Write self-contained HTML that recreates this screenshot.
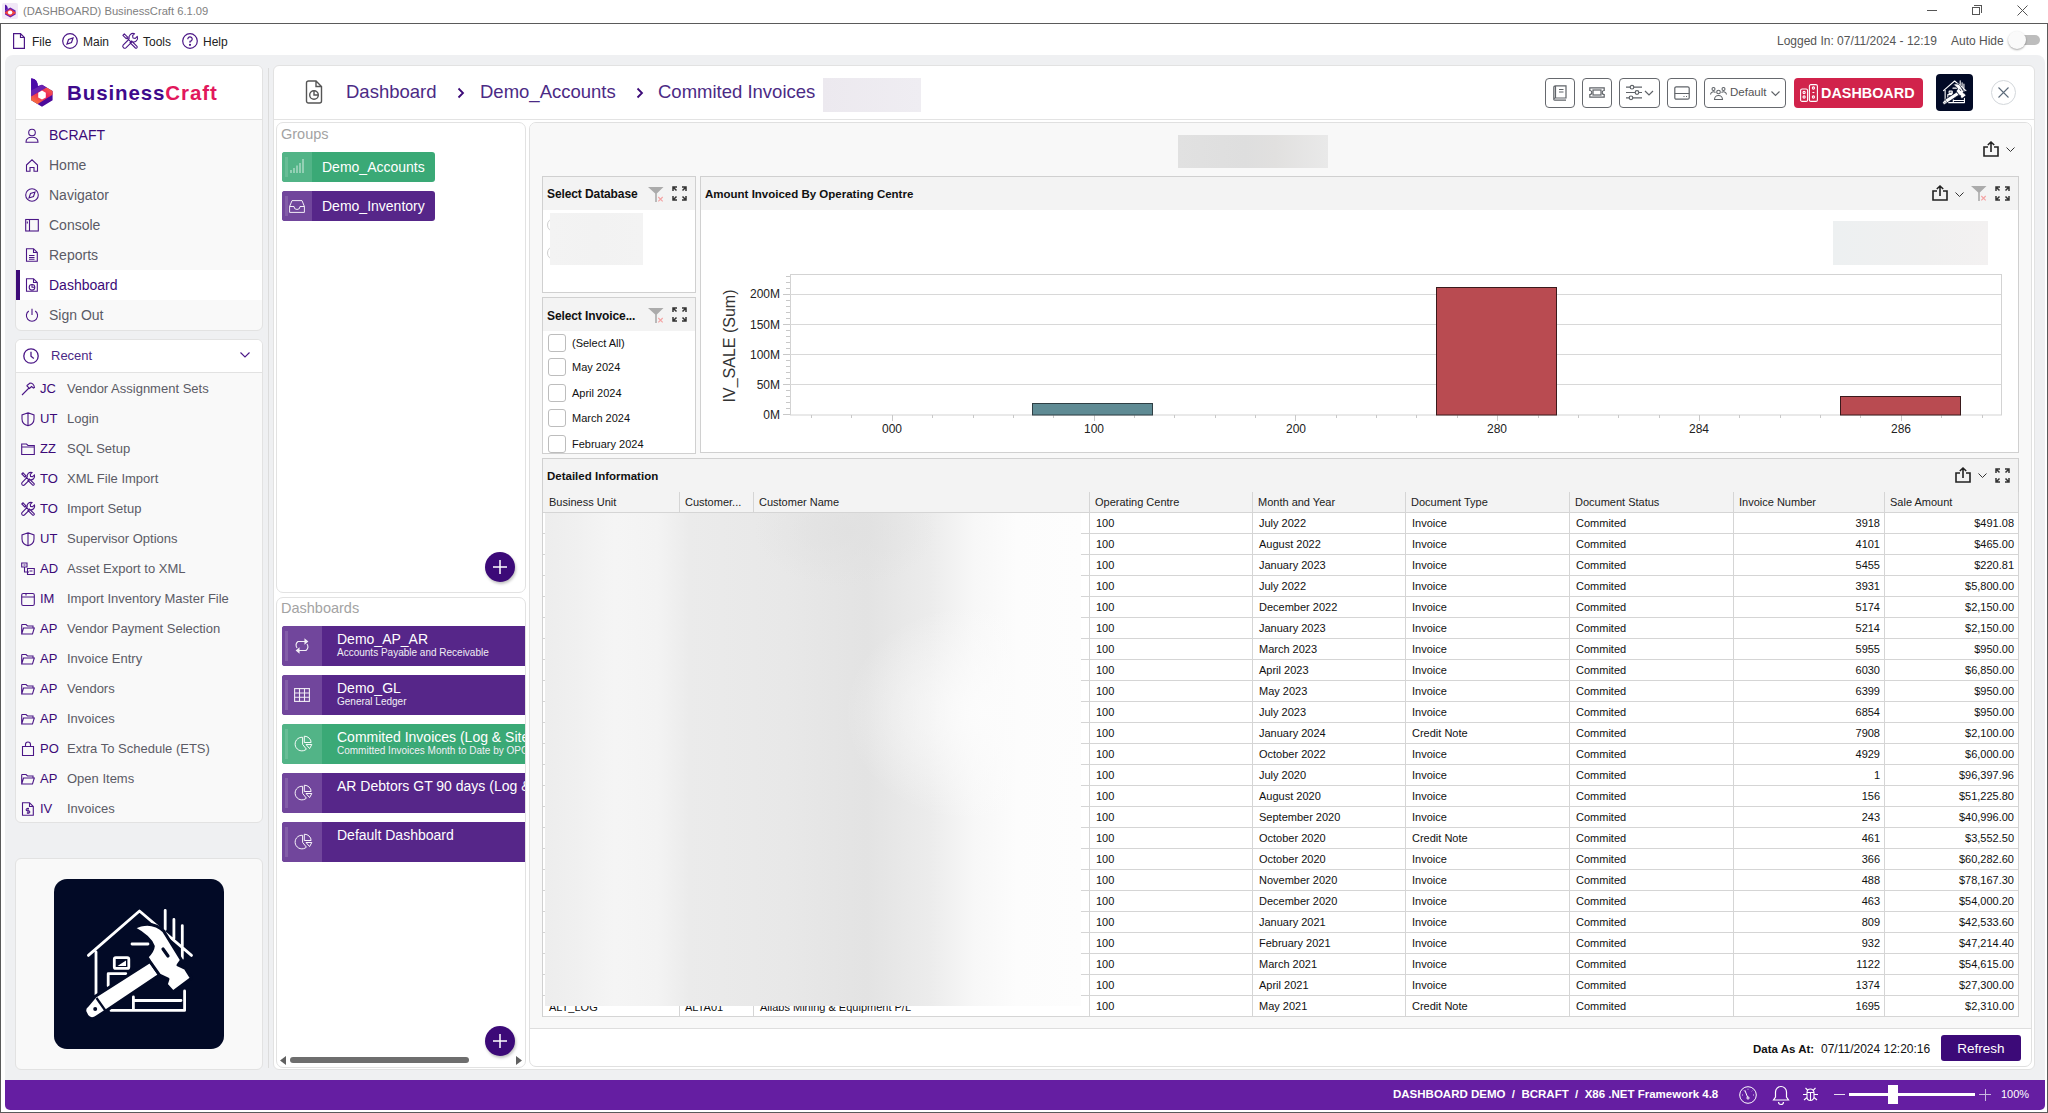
<!DOCTYPE html>
<html><head><meta charset="utf-8">
<style>
*{box-sizing:border-box;margin:0;padding:0}
html,body{width:2048px;height:1113px;overflow:hidden;background:#fff;font-family:"Liberation Sans",sans-serif}
.a{position:absolute}
.t{position:absolute;white-space:nowrap}
svg{position:absolute;overflow:visible}
</style></head><body>
<div class="a" style="left:0;top:0;width:2048px;height:1113px">

<!-- ===== TITLE BAR ===== -->
<div class="a" style="left:2px;top:3px;width:16px;height:16px;background:#f1e8f7;border-radius:2px"></div>
<svg style="left:4px;top:4px" width="13" height="14" viewBox="0 0 13 14">
<path d="M1 0.5 Q3.5 1 3.8 4 L3.8 5.2 L1 6.6Z" fill="#5214a8"/>
<path d="M1 6.6 L6.3 3.6 L11.6 6.6 L11.6 10.6 L6.3 13.6 L1 10.6Z" fill="#6b1fb0"/>
<path d="M1 8.2 L6.3 5.1 L11.6 8.2 L11.6 9.2 L6.3 12.3 L1 9.2Z" fill="#f0433f"/>
<ellipse cx="6.1" cy="8.6" rx="2.2" ry="2" fill="#fff"/>
</svg>
<div class="t" style="left:23px;top:3px;font-size:11.2px;line-height:16px;color:#808080">(DASHBOARD) BusinessCraft 6.1.09</div>
<!-- window controls -->
<div class="a" style="left:1927px;top:10px;width:10px;height:1px;background:#555"></div>
<div class="a" style="left:1972px;top:7px;width:8px;height:8px;border:1px solid #555"></div>
<div class="a" style="left:1974px;top:5px;width:8px;height:8px;border-top:1px solid #555;border-right:1px solid #555"></div>
<svg style="left:2017px;top:5px" width="11" height="11" viewBox="0 0 11 11"><path d="M0.5 0.5L10.5 10.5M10.5 0.5L0.5 10.5" stroke="#555" stroke-width="1"/></svg>

<!-- window border -->
<div class="a" style="left:0;top:23px;width:2048px;height:1px;background:#5a5a5a"></div>
<div class="a" style="left:0;top:23px;width:1px;height:1090px;background:#5a5a5a"></div>
<div class="a" style="left:2047px;top:23px;width:1px;height:1090px;background:#5a5a5a"></div>
<div class="a" style="left:0;top:1112px;width:2048px;height:1px;background:#5a5a5a"></div>

<!-- ===== MENU BAR ===== -->
<svg style="left:13px;top:33px" width="12" height="16" viewBox="0 0 12 16" fill="none" stroke="#4b1787" stroke-width="1.2"><path d="M0.6 0.6H7.5L11.4 4.5V15.4H0.6Z M7.5 0.6V4.5H11.4"/></svg>
<div class="t" style="left:32px;top:34px;font-size:12px;line-height:17px;color:#222">File</div>
<svg style="left:62px;top:33px" width="16" height="16" viewBox="0 0 16 16" fill="none" stroke="#4b1787" stroke-width="1.2"><circle cx="8" cy="8" r="7.3"/><path d="M11 5L9.5 9.5L5 11L6.5 6.5Z"/></svg>
<div class="t" style="left:83px;top:34px;font-size:12px;line-height:17px;color:#222">Main</div>
<svg style="left:122px;top:33px" width="16" height="16" viewBox="0 0 16 16" fill="none" stroke="#4b1787" stroke-width="1.1" stroke-linejoin="round"><path d="M0.9 2.3L2.3 0.9L5.6 4.2L4.2 5.6Z M4.9 4.9L8.6 8.6 M8 9.6L9.6 8L15 13.4Q15.5 14 15 14.6L14.6 15Q14 15.5 13.4 15L8 9.6Z M7.2 6A4.2 4.2 0 0 1 12.6 0.7L10.6 2.7L11 5L13.3 5.4L15.3 3.4A4.2 4.2 0 0 1 10 8.8 M7.2 6L1.1 12.1Q0.2 13.4 1.4 14.6Q2.6 15.8 3.9 14.9L10 8.8"/></svg>
<div class="t" style="left:143px;top:34px;font-size:12px;line-height:17px;color:#222">Tools</div>
<svg style="left:182px;top:33px" width="16" height="16" viewBox="0 0 16 16" fill="none" stroke="#4b1787" stroke-width="1.2"><circle cx="8" cy="8" r="7.3"/><path d="M5.8 6.2A2.2 2.2 0 1 1 8 8.3V9.8"/><circle cx="8" cy="11.8" r="0.5" fill="#4b1787"/></svg>
<div class="t" style="left:203px;top:34px;font-size:12px;line-height:17px;color:#222">Help</div>

<div class="t" style="left:1777px;top:33px;font-size:12px;line-height:17px;color:#555">Logged In: 07/11/2024 - 12:19</div>
<div class="t" style="left:1951px;top:33px;font-size:12px;line-height:17px;color:#555">Auto Hide</div>
<div class="a" style="left:2010px;top:35px;width:30px;height:10px;border-radius:5px;background:#bdbdbd"></div>
<div class="a" style="left:2008px;top:31px;width:18px;height:18px;border-radius:50%;background:#fafafa;box-shadow:0 1px 2px rgba(0,0,0,.35)"></div>

<!-- ===== GRAY BACKGROUND ===== -->
<div class="a" style="left:5px;top:55px;width:2040px;height:1055px;background:#eff0f2;border-radius:8px 8px 4px 4px"></div>

<!-- SIDEBAR -->
<div class="a" style="left:15px;top:65px;width:248px;height:266px;background:#f9f9f9;border:1px solid #e2e2e2;border-radius:6px;overflow:hidden">
<div class="a" style="left:0;top:0;width:246px;height:54px;background:#fff;border-bottom:1px solid #e2e2e2"></div>
<div class="a" style="left:0;top:204px;width:246px;height:30px;background:#fff"></div>
<div class="a" style="left:0;top:204px;width:4px;height:30px;background:#3c0a78"></div>
</div>
<svg style="left:31px;top:78px" width="23" height="30" viewBox="0 0 23 30">
<defs><linearGradient id="lg1" x1="0" y1="1" x2="1" y2="0"><stop offset="0" stop-color="#ff8f2e"/><stop offset=".55" stop-color="#ea1f5e"/><stop offset="1" stop-color="#ff7d3c"/></linearGradient>
<clipPath id="hx"><path d="M0.2 0.5Q6.5 0.8 6.8 8.3L11 6.8L21.6 13V22.3L11 28.7L0.2 22.3Z"/></clipPath></defs>
<g clip-path="url(#hx)">
<path d="M-1 -1H30V30H-1Z" fill="#4c0a9a"/>
<path d="M-1 -1H25L16 9.3L-1 19Z" fill="#6a22b0"/>
<path d="M-1 -1H8L8 8.5L-1 13Z" fill="#4a0aa8"/>
<path d="M-1 19L16 9.3L25 14.5L5 27L-1 24Z" fill="url(#lg1)"/>
</g>
<path d="M7.2 14.8L11 12.6L14.8 14.8V19.4L11 21.6L7.2 19.4Z" fill="#fff"/>
</svg>
<div class="t" style="left:67px;top:80px;font-size:20.5px;line-height:25px;font-weight:bold;letter-spacing:0.9px;color:#3f0a8c">Business<span style="color:#e2175c">Craft</span></div>
<svg style="left:25px;top:128px" width="14" height="14" viewBox="0 0 14 14" fill="none" stroke="#4b1787" stroke-width="1.1"><circle cx="7" cy="4.5" r="3.3"/><path d="M1 14.3C1 10.5 3.5 9.3 7 9.3S13 10.5 13 14.3Z"/></svg>
<div class="t" style="left:49px;top:126px;font-size:14px;line-height:18px;color:#3c0a78">BCRAFT</div>
<svg style="left:25px;top:158px" width="14" height="14" viewBox="0 0 14 14" fill="none" stroke="#4b1787" stroke-width="1.1"><path d="M1.5 7L7 1.8L12.5 7V13.3H9V9.5H5V13.3H1.5Z"/></svg>
<div class="t" style="left:49px;top:156px;font-size:14px;line-height:18px;color:#5b5b66">Home</div>
<svg style="left:25px;top:188px" width="14" height="14" viewBox="0 0 14 14" fill="none" stroke="#4b1787" stroke-width="1.1"><circle cx="7" cy="7" r="6.3"/><path d="M10 4L8.5 8.5L4 10L5.5 5.5Z"/></svg>
<div class="t" style="left:49px;top:186px;font-size:14px;line-height:18px;color:#5b5b66">Navigator</div>
<svg style="left:25px;top:218px" width="14" height="14" viewBox="0 0 14 14" fill="none" stroke="#4b1787" stroke-width="1.1"><rect x="0.7" y="1.5" width="12.6" height="11.5"/><path d="M4.5 1.5V13 M2.3 3.5V5.5"/></svg>
<div class="t" style="left:49px;top:216px;font-size:14px;line-height:18px;color:#5b5b66">Console</div>
<svg style="left:25px;top:248px" width="14" height="14" viewBox="0 0 14 14" fill="none" stroke="#4b1787" stroke-width="1.1"><path d="M1.5 0.7H8.5L12.3 4.5V13.3H1.5Z M8.5 0.7V4.5H12.3 M4 7.5H9.5 M4 9.5H9.5 M4 11.3H9.5"/></svg>
<div class="t" style="left:49px;top:246px;font-size:14px;line-height:18px;color:#5b5b66">Reports</div>
<svg style="left:25px;top:278px" width="14" height="14" viewBox="0 0 14 14" fill="none" stroke="#4b1787" stroke-width="1.1"><path d="M1.5 0.7H8.5L12.3 4.5V13.3H1.5Z M8.5 0.7V4.5H12.3"/><circle cx="7" cy="9.3" r="2.8"/><path d="M7 6.5V9.3H9.8"/></svg>
<div class="t" style="left:49px;top:276px;font-size:14px;line-height:18px;color:#3c0a78">Dashboard</div>
<svg style="left:25px;top:308px" width="14" height="14" viewBox="0 0 14 14" fill="none" stroke="#4b1787" stroke-width="1.1"><path d="M7 0.8V7 M3.8 3A5.6 5.6 0 1 0 10.2 3"/></svg>
<div class="t" style="left:49px;top:306px;font-size:14px;line-height:18px;color:#5b5b66">Sign Out</div>
<div class="a" style="left:15px;top:339px;width:248px;height:484px;background:#f9f9f9;border:1px solid #e2e2e2;border-radius:6px;overflow:hidden">
<div class="a" style="left:0;top:0;width:246px;height:33px;background:#fff;border-bottom:1px solid #e2e2e2"></div>
</div>
<svg style="left:23px;top:348px" width="16" height="16" viewBox="0 0 16 16" fill="none" stroke="#4b1787" stroke-width="1.3"><circle cx="8" cy="8" r="7.2"/><path d="M8 3.8V8.2L10.8 10.5"/></svg>
<div class="t" style="left:51px;top:347px;font-size:13px;line-height:18px;color:#4b2a85">Recent</div>
<svg style="left:240px;top:352px" width="10" height="6" viewBox="0 0 10 6" fill="none" stroke="#4b1787" stroke-width="1.1"><path d="M0.5 0.5L5 5L9.5 0.5"/></svg>
<svg style="left:21px;top:382px" width="14" height="14" viewBox="0 0 14 14" fill="none" stroke="#4b1787" stroke-width="1.1"><path d="M1 13L8 6 M6 3.5L9 1C11 1 13 3 13.5 5.5L12.5 6L10.5 4.5L8.5 6.5L6 4Z"/></svg>
<div class="t" style="left:40px;top:380px;font-size:13px;line-height:18px;color:#3c0a78">JC</div>
<div class="t" style="left:67px;top:380px;font-size:13px;line-height:18px;color:#5b5b66">Vendor Assignment Sets</div>
<svg style="left:21px;top:412px" width="14" height="14" viewBox="0 0 14 14" fill="none" stroke="#4b1787" stroke-width="1.1"><path d="M7 0.8L13 3V7C13 10.5 10.5 12.8 7 13.7C3.5 12.8 1 10.5 1 7V3Z M7 0.8V13.7"/></svg>
<div class="t" style="left:40px;top:410px;font-size:13px;line-height:18px;color:#3c0a78">UT</div>
<div class="t" style="left:67px;top:410px;font-size:13px;line-height:18px;color:#5b5b66">Login</div>
<svg style="left:21px;top:442px" width="14" height="14" viewBox="0 0 14 14" fill="none" stroke="#4b1787" stroke-width="1.1"><path d="M0.7 2H5.5L7 3.5H13.3V12.5H0.7Z M0.7 5H13.3"/></svg>
<div class="t" style="left:40px;top:440px;font-size:13px;line-height:18px;color:#3c0a78">ZZ</div>
<div class="t" style="left:67px;top:440px;font-size:13px;line-height:18px;color:#5b5b66">SQL Setup</div>
<svg style="left:21px;top:472px" width="14" height="14" viewBox="0 0 14 14" fill="none" stroke="#4b1787" stroke-width="1.1"><path d="M0.8 2L2 0.8L4.9 3.7L3.7 4.9Z M4.3 4.3L7.5 7.5 M7 8.4L8.4 7L13.1 11.7Q13.5 12.2 13.1 12.7L12.7 13.1Q12.2 13.5 11.7 13.1L7 8.4Z M6.3 5.2A3.7 3.7 0 0 1 11 0.6L9.3 2.4L9.6 4.4L11.6 4.7L13.4 3A3.7 3.7 0 0 1 8.8 7.7 M6.3 5.2L1 10.6Q0.2 11.7 1.2 12.8Q2.3 13.8 3.4 13L8.8 7.7"/></svg>
<div class="t" style="left:40px;top:470px;font-size:13px;line-height:18px;color:#3c0a78">TO</div>
<div class="t" style="left:67px;top:470px;font-size:13px;line-height:18px;color:#5b5b66">XML File Import</div>
<svg style="left:21px;top:502px" width="14" height="14" viewBox="0 0 14 14" fill="none" stroke="#4b1787" stroke-width="1.1"><path d="M0.8 2L2 0.8L4.9 3.7L3.7 4.9Z M4.3 4.3L7.5 7.5 M7 8.4L8.4 7L13.1 11.7Q13.5 12.2 13.1 12.7L12.7 13.1Q12.2 13.5 11.7 13.1L7 8.4Z M6.3 5.2A3.7 3.7 0 0 1 11 0.6L9.3 2.4L9.6 4.4L11.6 4.7L13.4 3A3.7 3.7 0 0 1 8.8 7.7 M6.3 5.2L1 10.6Q0.2 11.7 1.2 12.8Q2.3 13.8 3.4 13L8.8 7.7"/></svg>
<div class="t" style="left:40px;top:500px;font-size:13px;line-height:18px;color:#3c0a78">TO</div>
<div class="t" style="left:67px;top:500px;font-size:13px;line-height:18px;color:#5b5b66">Import Setup</div>
<svg style="left:21px;top:532px" width="14" height="14" viewBox="0 0 14 14" fill="none" stroke="#4b1787" stroke-width="1.1"><path d="M7 0.8L13 3V7C13 10.5 10.5 12.8 7 13.7C3.5 12.8 1 10.5 1 7V3Z M7 0.8V13.7"/></svg>
<div class="t" style="left:40px;top:530px;font-size:13px;line-height:18px;color:#3c0a78">UT</div>
<div class="t" style="left:67px;top:530px;font-size:13px;line-height:18px;color:#5b5b66">Supervisor Options</div>
<svg style="left:21px;top:562px" width="14" height="14" viewBox="0 0 14 14" fill="none" stroke="#4b1787" stroke-width="1.1"><path d="M0.7 1H6V5H0.7Z M2.5 3H4.5 M3.5 5V10H8 M6.5 6.5H13.3V12.5H6.5Z M8.5 9H11.5"/></svg>
<div class="t" style="left:40px;top:560px;font-size:13px;line-height:18px;color:#3c0a78">AD</div>
<div class="t" style="left:67px;top:560px;font-size:13px;line-height:18px;color:#5b5b66">Asset Export to XML</div>
<svg style="left:21px;top:592px" width="14" height="14" viewBox="0 0 14 14" fill="none" stroke="#4b1787" stroke-width="1.1"><rect x="0.7" y="1.5" width="12.6" height="12" rx="1.5"/><path d="M0.7 5H13.3 M5 1.5V3.5"/></svg>
<div class="t" style="left:40px;top:590px;font-size:13px;line-height:18px;color:#3c0a78">IM</div>
<div class="t" style="left:67px;top:590px;font-size:13px;line-height:18px;color:#5b5b66">Import Inventory Master File</div>
<svg style="left:21px;top:622px" width="14" height="14" viewBox="0 0 14 14" fill="none" stroke="#4b1787" stroke-width="1.1"><path d="M0.7 2.5H5L6.5 4H12V6 M0.7 12V2.5 M0.7 12L2.5 6H13.3L11.5 12Z"/></svg>
<div class="t" style="left:40px;top:620px;font-size:13px;line-height:18px;color:#3c0a78">AP</div>
<div class="t" style="left:67px;top:620px;font-size:13px;line-height:18px;color:#5b5b66">Vendor Payment Selection</div>
<svg style="left:21px;top:652px" width="14" height="14" viewBox="0 0 14 14" fill="none" stroke="#4b1787" stroke-width="1.1"><path d="M0.7 2.5H5L6.5 4H12V6 M0.7 12V2.5 M0.7 12L2.5 6H13.3L11.5 12Z"/></svg>
<div class="t" style="left:40px;top:650px;font-size:13px;line-height:18px;color:#3c0a78">AP</div>
<div class="t" style="left:67px;top:650px;font-size:13px;line-height:18px;color:#5b5b66">Invoice Entry</div>
<svg style="left:21px;top:682px" width="14" height="14" viewBox="0 0 14 14" fill="none" stroke="#4b1787" stroke-width="1.1"><path d="M0.7 2.5H5L6.5 4H12V6 M0.7 12V2.5 M0.7 12L2.5 6H13.3L11.5 12Z"/></svg>
<div class="t" style="left:40px;top:680px;font-size:13px;line-height:18px;color:#3c0a78">AP</div>
<div class="t" style="left:67px;top:680px;font-size:13px;line-height:18px;color:#5b5b66">Vendors</div>
<svg style="left:21px;top:712px" width="14" height="14" viewBox="0 0 14 14" fill="none" stroke="#4b1787" stroke-width="1.1"><path d="M0.7 2.5H5L6.5 4H12V6 M0.7 12V2.5 M0.7 12L2.5 6H13.3L11.5 12Z"/></svg>
<div class="t" style="left:40px;top:710px;font-size:13px;line-height:18px;color:#3c0a78">AP</div>
<div class="t" style="left:67px;top:710px;font-size:13px;line-height:18px;color:#5b5b66">Invoices</div>
<svg style="left:21px;top:742px" width="14" height="14" viewBox="0 0 14 14" fill="none" stroke="#4b1787" stroke-width="1.1"><path d="M1.5 4.5H12.5V13.5H1.5Z M4.5 4.5V2.5A2.5 2.5 0 0 1 9.5 2.5V4.5"/></svg>
<div class="t" style="left:40px;top:740px;font-size:13px;line-height:18px;color:#3c0a78">PO</div>
<div class="t" style="left:67px;top:740px;font-size:13px;line-height:18px;color:#5b5b66">Extra To Schedule (ETS)</div>
<svg style="left:21px;top:772px" width="14" height="14" viewBox="0 0 14 14" fill="none" stroke="#4b1787" stroke-width="1.1"><path d="M0.7 2.5H5L6.5 4H12V6 M0.7 12V2.5 M0.7 12L2.5 6H13.3L11.5 12Z"/></svg>
<div class="t" style="left:40px;top:770px;font-size:13px;line-height:18px;color:#3c0a78">AP</div>
<div class="t" style="left:67px;top:770px;font-size:13px;line-height:18px;color:#5b5b66">Open Items</div>
<svg style="left:21px;top:802px" width="14" height="14" viewBox="0 0 14 14" fill="none" stroke="#4b1787" stroke-width="1.1"><path d="M1.5 0.7H8.5L12.3 4.5V13.3H1.5Z M8.5 0.7V4.5H12.3 M8 6.5H6.3A1 1 0 0 0 6.3 8.8H7.7A1 1 0 0 1 7.7 11H5.8 M7 5.8V12"/></svg>
<div class="t" style="left:40px;top:800px;font-size:13px;line-height:18px;color:#3c0a78">IV</div>
<div class="t" style="left:67px;top:800px;font-size:13px;line-height:18px;color:#5b5b66">Invoices</div>
<div class="a" style="left:15px;top:858px;width:248px;height:212px;background:#f9f9f9;border:1px solid #e2e2e2;border-radius:6px"></div>
<div class="a" style="left:54px;top:879px;width:170px;height:170px;background:#020a26;border-radius:13px"></div>
<svg style="left:54px;top:879px" width="170" height="170" viewBox="0 0 170 170"><g fill="none" stroke="#fff" stroke-width="2.8" stroke-linecap="round" stroke-linejoin="round">
<path d="M34.4 76.4L85.5 32L137.5 76.4 M42 73V116 M57 131.4H130.6V112 M79.4 131.4V118 M79.4 121.5H127 M54.2 107V94.7H71.8 M78 65H94 M111.2 31.3V50.4 M119.9 40.5V59.6 M128.3 46.6V79.4"/>
<rect x="60.3" y="78.7" width="14.5" height="10.7" rx="1.5"/>
</g>
<path d="M63.5 87L72 81.5V87Z" fill="#fff"/>
<g fill="#fff" stroke="#020a26" stroke-width="3" stroke-linejoin="round">
<path d="M41 117.5L96 82.5L105.5 96L52.5 131.5L41 139Q36 141 33 137L31 133Q30 129 33 127Z"/>
<path d="M79.4 48.9Q90 44 97.8 45.8Q108 48 111.5 55L127.5 81L124 86L131.4 89.4L137.5 99.3L119.1 113L112.3 105.4L114 100L105.5 96L96 82.5L93 78Q99 72 99.3 67.2Q96 58 79.4 48.9Z"/>
</g>
<path d="M109 70L114 77" stroke="#020a26" stroke-width="3.2" stroke-linecap="round"/>
<path d="M42.5 119L52 132.5" stroke="#020a26" stroke-width="2.2"/>
<circle cx="41.2" cy="130" r="2" fill="#020a26"/></svg>
<div class="a" style="left:268px;top:68px;width:1px;height:1000px;background:#dcdcdc"></div>

<!-- MAIN CARD -->
<div class="a" style="left:273px;top:65px;width:1762px;height:1005px;background:#fff;border:1px solid #e2e2e2;border-radius:6px"></div>
<div class="a" style="left:274px;top:119px;width:1760px;height:1px;background:#e3e3e3"></div>
<svg style="left:305px;top:80px" width="18" height="24" viewBox="0 0 18 24" fill="none" stroke="#555" stroke-width="1.4"><path d="M1.5 3A2 2 0 0 1 3.5 1H11L16.5 6.5V21A2 2 0 0 1 14.5 23H3.5A2 2 0 0 1 1.5 21Z M11 1V6.5H16.5"/><circle cx="9" cy="15" r="4.3"/><path d="M9 10.7V15H13.3"/></svg>
<div class="t" style="left:346px;top:81px;font-size:18.5px;line-height:22px;color:#4b2a85">Dashboard</div>
<div class="t" style="left:480px;top:81px;font-size:18.5px;line-height:22px;color:#4b2a85">Demo_Accounts</div>
<div class="t" style="left:658px;top:81px;font-size:18.5px;line-height:22px;color:#4b2a85">Commited Invoices</div>
<svg style="left:457px;top:87px" width="8" height="12" viewBox="0 0 8 12" fill="none" stroke="#3c0a78" stroke-width="1.8"><path d="M1.5 1.5L6 6L1.5 10.5"/></svg>
<svg style="left:636px;top:87px" width="8" height="12" viewBox="0 0 8 12" fill="none" stroke="#3c0a78" stroke-width="1.8"><path d="M1.5 1.5L6 6L1.5 10.5"/></svg>
<div class="a" style="left:823px;top:78px;width:98px;height:34px;background:linear-gradient(90deg,#ece9ef,#efedf2)"></div>
<div class="a" style="left:1545px;top:78px;width:30px;height:30px;border:1.3px solid #66696e;border-radius:4px"></div>
<div class="a" style="left:1582px;top:78px;width:30px;height:30px;border:1.3px solid #66696e;border-radius:4px"></div>
<div class="a" style="left:1619px;top:78px;width:41px;height:30px;border:1.3px solid #66696e;border-radius:4px"></div>
<div class="a" style="left:1667px;top:78px;width:30px;height:30px;border:1.3px solid #66696e;border-radius:4px"></div>
<div class="a" style="left:1704px;top:78px;width:82px;height:30px;border:1.3px solid #66696e;border-radius:4px"></div>
<svg style="left:1553px;top:85px" width="14" height="16" viewBox="0 0 14 16" fill="none" stroke="#5f6368" stroke-width="1.2"><path d="M2.5 0.8H13V13H2.5A1.7 1.7 0 0 0 0.8 14.7V2.5A1.7 1.7 0 0 1 2.5 0.8Z M0.8 14.7A1.3 1.3 0 0 0 2.2 15.2H13 M2.5 0.8V13 M6 4.5H10.5 M6 7H10.5"/></svg>
<svg style="left:1589px;top:87px" width="16" height="11" viewBox="0 0 16 11" fill="none" stroke="#5f6368" stroke-width="1.2"><path d="M0.8 0.8H15.2V3.5A2 2 0 0 0 15.2 7.5V10.2H0.8V7.5A2 2 0 0 0 0.8 3.5Z"/><rect x="4" y="3" width="8" height="5"/></svg>
<svg style="left:1626px;top:85px" width="28" height="15" viewBox="0 0 28 15" fill="none" stroke="#5f6368" stroke-width="1.2"><path d="M0 2.2H16 M0 7.5H16 M0 12.8H16"/><circle cx="6" cy="2.2" r="1.8" fill="#fff"/><circle cx="11" cy="7.5" r="1.8" fill="#fff"/><circle cx="5" cy="12.8" r="1.8" fill="#fff"/><path d="M19 6L23 10L27 6"/></svg>
<svg style="left:1674px;top:86px" width="16" height="14" viewBox="0 0 16 14" fill="none" stroke="#5f6368" stroke-width="1.2"><rect x="0.8" y="0.8" width="14.4" height="12.4" rx="1.5"/><path d="M0.8 7.5H15.2 M9.5 10.5H10.5 M12 10.5H13"/></svg>
<svg style="left:1710px;top:87px" width="17" height="13" viewBox="0 0 17 13" fill="none" stroke="#5f6368" stroke-width="1.1"><circle cx="3.5" cy="2" r="1.5"/><circle cx="13.5" cy="2" r="1.5"/><circle cx="8.5" cy="5" r="1.8"/><path d="M0.5 7.5A3 3 0 0 1 5.5 5.5 M16.5 7.5A3 3 0 0 0 11.5 5.5 M4.5 12.5A4 4 0 0 1 12.5 12.5Z"/></svg>
<div class="t" style="left:1730px;top:84px;font-size:11.5px;line-height:17px;color:#555">Default</div>
<svg style="left:1771px;top:91px" width="9" height="5" viewBox="0 0 9 5" fill="none" stroke="#5f6368" stroke-width="1.1"><path d="M0.5 0.5L4.5 4.5L8.5 0.5"/></svg>
<div class="a" style="left:1794px;top:78px;width:129px;height:30px;background:#d1234b;border-radius:4px"></div>
<svg style="left:1800px;top:84px" width="18" height="18" viewBox="0 0 18 18" fill="none" stroke="#fff" stroke-width="1.1"><rect x="0.6" y="5" width="7" height="12.4" rx="1.5"/><rect x="9.4" y="0.6" width="8" height="16.8" rx="1.5"/><circle cx="4.1" cy="8.5" r="1.1"/><circle cx="4.1" cy="13" r="1.1"/><circle cx="13.4" cy="4" r="1.1"/><path d="M12.4 8.5H14.4"/><circle cx="13.4" cy="13" r="1.1"/></svg>
<div class="t" style="left:1821px;top:84px;font-size:14.4px;line-height:18px;font-weight:bold;color:#fff">DASHBOARD</div>
<div class="a" style="left:1936px;top:74px;width:37px;height:37px;background:#020a26;border-radius:4px"></div>
<svg style="left:1936px;top:74px" width="37" height="37" viewBox="0 0 170 170"><g fill="none" stroke="#fff" stroke-width="5" stroke-linecap="round" stroke-linejoin="round">
<path d="M34.4 76.4L85.5 32L137.5 76.4 M42 73V116 M57 131.4H130.6V112 M79.4 131.4V118 M79.4 121.5H127 M54.2 107V94.7H71.8 M78 65H94 M111.2 31.3V50.4 M119.9 40.5V59.6 M128.3 46.6V79.4"/>
<rect x="60.3" y="78.7" width="14.5" height="10.7" rx="1.5"/>
</g>
<path d="M63.5 87L72 81.5V87Z" fill="#fff"/>
<g fill="#fff" stroke="#020a26" stroke-width="3" stroke-linejoin="round">
<path d="M41 117.5L96 82.5L105.5 96L52.5 131.5L41 139Q36 141 33 137L31 133Q30 129 33 127Z"/>
<path d="M79.4 48.9Q90 44 97.8 45.8Q108 48 111.5 55L127.5 81L124 86L131.4 89.4L137.5 99.3L119.1 113L112.3 105.4L114 100L105.5 96L96 82.5L93 78Q99 72 99.3 67.2Q96 58 79.4 48.9Z"/>
</g>
<path d="M109 70L114 77" stroke="#020a26" stroke-width="3.2" stroke-linecap="round"/>
<path d="M42.5 119L52 132.5" stroke="#020a26" stroke-width="2.2"/>
<circle cx="41.2" cy="130" r="2" fill="#020a26"/></svg>
<div class="a" style="left:1991px;top:80px;width:25px;height:25px;border:1px solid #d3d7db;border-radius:50%"></div>
<svg style="left:1998px;top:87px" width="11" height="11" viewBox="0 0 11 11" fill="none" stroke="#5d6b7a" stroke-width="1.1"><path d="M0.5 0.5L10.5 10.5M10.5 0.5L0.5 10.5"/></svg>
<div class="a" style="left:276px;top:122px;width:250px;height:471px;border:1px solid #e2e2e2;border-radius:7px"></div>
<div class="t" style="left:281px;top:125px;font-size:14.5px;line-height:19px;color:#a3a3a3">Groups</div>
<div class="a" style="left:282px;top:152px;width:153px;height:30px;background:#3aa976;border-radius:3px;overflow:hidden">
<div class="a" style="left:0;top:0;width:30px;height:30px;background:#52b487"></div>
<div class="a" style="left:3px;top:5px;width:3px;height:20px;background:rgba(255,255,255,.13)"></div>
</div>
<svg style="left:290px;top:158px" width="14" height="16" viewBox="0 0 14 16" fill="none" stroke="#fff" stroke-width="0.9" opacity=".85"><path d="M1 15V12 M4 15V10 M7 15V7.5 M10 15V5 M13 15V1"/></svg>
<div class="t" style="left:322px;top:158px;font-size:14px;line-height:18px;color:#fff">Demo_Accounts</div>
<div class="a" style="left:282px;top:191px;width:153px;height:30px;background:#562689;border-radius:3px;overflow:hidden">
<div class="a" style="left:0;top:0;width:30px;height:30px;background:#71469c"></div>
<div class="a" style="left:3px;top:5px;width:3px;height:20px;background:rgba(255,255,255,.13)"></div>
</div>
<svg style="left:289px;top:200px" width="16" height="13" viewBox="0 0 16 13" fill="none" stroke="#fff" stroke-width="1" opacity=".9"><path d="M0.6 6.5L3 0.6H13L15.4 6.5V12.4H0.6Z M0.6 6.5H5A3 3 0 0 0 11 6.5H15.4"/></svg>
<div class="t" style="left:322px;top:197px;font-size:14px;line-height:18px;color:#fff">Demo_Inventory</div>
<div class="a" style="left:485px;top:552px;width:30px;height:30px;border-radius:50%;background:#3c0a78;box-shadow:1px 2px 3px rgba(0,0,0,.25)"></div><svg style="left:492px;top:559px" width="16" height="16" viewBox="0 0 16 16" fill="none" stroke="#fff" stroke-width="1.5"><path d="M8 1V15M1 8H15"/></svg>
<div class="a" style="left:276px;top:597px;width:250px;height:471px;border:1px solid #e2e2e2;border-radius:7px;overflow:hidden">
</div>
<div class="t" style="left:281px;top:599px;font-size:14.5px;line-height:19px;color:#a3a3a3">Dashboards</div>
<div class="a" style="left:278px;top:598px;width:247px;height:469px;overflow:hidden">
<div class="a" style="left:4px;top:28px;width:260px;height:40px;background:#562689;border-radius:3px 0 0 3px">
<div class="a" style="left:0;top:0;width:40px;height:40px;background:#71469c;border-radius:3px 0 0 3px"></div>
<div class="a" style="left:3px;top:5px;width:3px;height:30px;background:rgba(255,255,255,.13)"></div>
<div class="t" style="left:55px;top:5px;font-size:14px;line-height:17px;color:#fff">Demo_AP_AR</div>
<div class="t" style="left:55px;top:20px;font-size:10px;line-height:13px;color:#f0eef5">Accounts Payable and Receivable</div>
</div>
<div class="a" style="left:4px;top:77px;width:260px;height:40px;background:#562689;border-radius:3px 0 0 3px">
<div class="a" style="left:0;top:0;width:40px;height:40px;background:#71469c;border-radius:3px 0 0 3px"></div>
<div class="a" style="left:3px;top:5px;width:3px;height:30px;background:rgba(255,255,255,.13)"></div>
<div class="t" style="left:55px;top:5px;font-size:14px;line-height:17px;color:#fff">Demo_GL</div>
<div class="t" style="left:55px;top:20px;font-size:10px;line-height:13px;color:#f0eef5">General Ledger</div>
</div>
<div class="a" style="left:4px;top:126px;width:260px;height:40px;background:#3aa976;border-radius:3px 0 0 3px">
<div class="a" style="left:0;top:0;width:40px;height:40px;background:#52b487;border-radius:3px 0 0 3px"></div>
<div class="a" style="left:3px;top:5px;width:3px;height:30px;background:rgba(255,255,255,.13)"></div>
<div class="t" style="left:55px;top:5px;font-size:14px;line-height:17px;color:#fff">Commited Invoices (Log &amp; Site)</div>
<div class="t" style="left:55px;top:20px;font-size:10px;line-height:13px;color:#f0eef5">Committed Invoices Month to Date by OPC</div>
</div>
<div class="a" style="left:4px;top:175px;width:260px;height:40px;background:#562689;border-radius:3px 0 0 3px">
<div class="a" style="left:0;top:0;width:40px;height:40px;background:#71469c;border-radius:3px 0 0 3px"></div>
<div class="a" style="left:3px;top:5px;width:3px;height:30px;background:rgba(255,255,255,.13)"></div>
<div class="t" style="left:55px;top:5px;font-size:14px;line-height:17px;color:#fff">AR Debtors GT 90 days (Log &amp; Site)</div>
</div>
<div class="a" style="left:4px;top:224px;width:260px;height:40px;background:#562689;border-radius:3px 0 0 3px">
<div class="a" style="left:0;top:0;width:40px;height:40px;background:#71469c;border-radius:3px 0 0 3px"></div>
<div class="a" style="left:3px;top:5px;width:3px;height:30px;background:rgba(255,255,255,.13)"></div>
<div class="t" style="left:55px;top:5px;font-size:14px;line-height:17px;color:#fff">Default Dashboard</div>
</div>
</div>
<svg style="left:294px;top:638px" width="16" height="16" viewBox="0 0 16 16" fill="none" stroke="#fff" stroke-width="1.1" opacity=".9"><path d="M3 10A5 5 0 0 1 4 3.5H13 M11 1.5L13.5 3.5L11 5.5Z M13 6A5 5 0 0 1 12 12.5H3 M5 10.5L2.5 12.5L5 14.5Z"/></svg>
<svg style="left:294px;top:688px" width="16" height="14" viewBox="0 0 16 14" fill="none" stroke="#fff" stroke-width="1.1" opacity=".9"><rect x="0.6" y="0.6" width="14.8" height="12.8"/><path d="M0.6 5H15.4 M0.6 9.2H15.4 M5.5 0.6V13.4 M10.5 0.6V13.4"/></svg>
<svg style="left:295.5px;top:736px" width="16" height="16" viewBox="0 0 16 16" fill="none" stroke="#fff" stroke-width="1" opacity=".95"><path d="M6.6 1.3A6.8 6.8 0 1 0 10.4 13.2L6.6 8.4Z M8.3 0.2V6.5H15.1A6.8 6.3 0 0 0 8.3 0.2Z M10 8.5H15.8L13.6 12.6Z"/></svg>
<svg style="left:295.5px;top:785px" width="16" height="16" viewBox="0 0 16 16" fill="none" stroke="#fff" stroke-width="1" opacity=".95"><path d="M6.6 1.3A6.8 6.8 0 1 0 10.4 13.2L6.6 8.4Z M8.3 0.2V6.5H15.1A6.8 6.3 0 0 0 8.3 0.2Z M10 8.5H15.8L13.6 12.6Z"/></svg>
<svg style="left:295.5px;top:834px" width="16" height="16" viewBox="0 0 16 16" fill="none" stroke="#fff" stroke-width="1" opacity=".95"><path d="M6.6 1.3A6.8 6.8 0 1 0 10.4 13.2L6.6 8.4Z M8.3 0.2V6.5H15.1A6.8 6.3 0 0 0 8.3 0.2Z M10 8.5H15.8L13.6 12.6Z"/></svg>
<div class="a" style="left:485px;top:1026px;width:30px;height:30px;border-radius:50%;background:#3c0a78;box-shadow:1px 2px 3px rgba(0,0,0,.25)"></div><svg style="left:492px;top:1033px" width="16" height="16" viewBox="0 0 16 16" fill="none" stroke="#fff" stroke-width="1.5"><path d="M8 1V15M1 8H15"/></svg>
<svg style="left:280px;top:1056px" width="6" height="9" viewBox="0 0 6 9"><path d="M6 0V9L0 4.5Z" fill="#606060"/></svg>
<div class="a" style="left:290px;top:1057px;width:179px;height:6px;background:#6e6e6e;border-radius:3px"></div>
<svg style="left:516px;top:1056px" width="6" height="9" viewBox="0 0 6 9"><path d="M0 0V9L6 4.5Z" fill="#606060"/></svg>
<div class="a" style="left:529px;top:122px;width:1503px;height:945px;background:#fff;border:1px solid #e0e0e0;border-radius:7px;overflow:hidden"><div class="a" style="left:0;top:0;width:1501px;height:906px;background:#f8f8f8;border-bottom:1px solid #dedede"></div></div>
<div class="a" style="left:1178px;top:135px;width:150px;height:33px;background:linear-gradient(90deg,#e1e1e1,#dedede 45%,#e1e0df 65%,#e9e9e9)"></div>
<svg style="left:1983px;top:141px" width="16" height="16" viewBox="0 0 16 16" fill="none" stroke="#222" stroke-width="1.6"><path d="M5 6H1V15H15V6H11 M8 11V1 M4.8 4L8 1L11.2 4"/></svg><svg style="left:2006px;top:147px" width="9" height="5" viewBox="0 0 9 5" fill="none" stroke="#333" stroke-width="1"><path d="M0.5 0.5L4.5 4.5L8.5 0.5"/></svg>
<div class="a" style="left:542px;top:176px;width:154px;height:117px;background:#fff;border:1px solid #d0d0d0"><div class="a" style="left:0;top:0;width:152px;height:33px;background:#f3f3f3"></div></div>
<div class="t" style="left:547px;top:187px;font-size:12px;line-height:15px;font-weight:bold;color:#111;letter-spacing:-0.1px">Select Database</div>
<svg style="left:648px;top:186px" width="16" height="16" viewBox="0 0 16 16"><path d="M0 1H15.5L8.8 7.6V16H7.2V7.6Z" fill="#ababab"/><path d="M10.3 11L14.7 15.4M14.7 11L10.3 15.4" stroke="#f4a3a3" stroke-width="1.1"/></svg>
<svg style="left:672px;top:186px" width="15" height="15" viewBox="0 0 15 15" fill="none" stroke="#333" stroke-width="1.5"><path d="M1 5V1H5 M1 1L4.5 4.5 M10 1H14V5 M14 1L10.5 4.5 M1 10V14H5 M1 14L4.5 10.5 M14 10V14H10 M14 14L10.5 10.5"/></svg>
<div class="a" style="left:547px;top:218px;width:14px;height:14px;border:1px solid #cfcfcf;border-radius:50%"></div>
<div class="a" style="left:547px;top:246px;width:14px;height:14px;border:1px solid #cfcfcf;border-radius:50%"></div>
<div class="a" style="left:550px;top:213px;width:93px;height:52px;background:linear-gradient(90deg,#f3f3f3,#f2f2f2 50%,#f3f3f3)"></div>
<div class="a" style="left:542px;top:297px;width:154px;height:157px;background:#fff;border:1px solid #d0d0d0"><div class="a" style="left:0;top:0;width:152px;height:33px;background:#f3f3f3"></div></div>
<div class="t" style="left:547px;top:308.5px;font-size:12px;line-height:15px;font-weight:bold;color:#111;letter-spacing:-0.1px">Select Invoice...</div>
<svg style="left:648px;top:307px" width="16" height="16" viewBox="0 0 16 16"><path d="M0 1H15.5L8.8 7.6V16H7.2V7.6Z" fill="#ababab"/><path d="M10.3 11L14.7 15.4M14.7 11L10.3 15.4" stroke="#f4a3a3" stroke-width="1.1"/></svg>
<svg style="left:672px;top:307px" width="15" height="15" viewBox="0 0 15 15" fill="none" stroke="#333" stroke-width="1.5"><path d="M1 5V1H5 M1 1L4.5 4.5 M10 1H14V5 M14 1L10.5 4.5 M1 10V14H5 M1 14L4.5 10.5 M14 10V14H10 M14 14L10.5 10.5"/></svg>
<div class="a" style="left:548px;top:334px;width:18px;height:18px;border:1px solid #bdbdbd;border-radius:3px;background:#fff"></div>
<div class="t" style="left:572px;top:335px;font-size:11px;line-height:16px;color:#111">(Select All)</div>
<div class="a" style="left:548px;top:358px;width:18px;height:18px;border:1px solid #bdbdbd;border-radius:3px;background:#fff"></div>
<div class="t" style="left:572px;top:359px;font-size:11px;line-height:16px;color:#111">May 2024</div>
<div class="a" style="left:548px;top:384px;width:18px;height:18px;border:1px solid #bdbdbd;border-radius:3px;background:#fff"></div>
<div class="t" style="left:572px;top:385px;font-size:11px;line-height:16px;color:#111">April 2024</div>
<div class="a" style="left:548px;top:409px;width:18px;height:18px;border:1px solid #bdbdbd;border-radius:3px;background:#fff"></div>
<div class="t" style="left:572px;top:410px;font-size:11px;line-height:16px;color:#111">March 2024</div>
<div class="a" style="left:548px;top:435px;width:18px;height:18px;border:1px solid #bdbdbd;border-radius:3px;background:#fff"></div>
<div class="t" style="left:572px;top:436px;font-size:11px;line-height:16px;color:#111">February 2024</div>
<div class="a" style="left:543px;top:453px;width:152px;height:4px;background:#f8f8f8"></div>
<div class="a" style="left:542px;top:453px;width:154px;height:1px;background:#d0d0d0"></div>
<div class="a" style="left:700px;top:176px;width:1319px;height:277px;background:#fff;border:1px solid #d0d0d0"><div class="a" style="left:0;top:0;width:1317px;height:33px;background:#f3f3f3"></div></div>
<div class="t" style="left:705px;top:187px;font-size:11.5px;line-height:15px;font-weight:bold;color:#111">Amount Invoiced By Operating Centre</div>
<svg style="left:1932px;top:185px" width="16" height="16" viewBox="0 0 16 16" fill="none" stroke="#222" stroke-width="1.6"><path d="M5 6H1V15H15V6H11 M8 11V1 M4.8 4L8 1L11.2 4"/></svg><svg style="left:1955px;top:192px" width="9" height="5" viewBox="0 0 9 5" fill="none" stroke="#333" stroke-width="1"><path d="M0.5 0.5L4.5 4.5L8.5 0.5"/></svg>
<svg style="left:1971px;top:185px" width="16" height="16" viewBox="0 0 16 16"><path d="M0 1H15.5L8.8 7.6V16H7.2V7.6Z" fill="#ababab"/><path d="M10.3 11L14.7 15.4M14.7 11L10.3 15.4" stroke="#f4a3a3" stroke-width="1.1"/></svg>
<svg style="left:1995px;top:186px" width="15" height="15" viewBox="0 0 15 15" fill="none" stroke="#333" stroke-width="1.5"><path d="M1 5V1H5 M1 1L4.5 4.5 M10 1H14V5 M14 1L10.5 4.5 M1 10V14H5 M1 14L4.5 10.5 M14 10V14H10 M14 14L10.5 10.5"/></svg>
<div class="a" style="left:1833px;top:221px;width:155px;height:44px;background:linear-gradient(90deg,#edf0f1,#f0f0f0 60%,#f3f1f1)"></div>
<svg style="left:700px;top:176px" width="1319" height="277" viewBox="700 176 1319 277">
<rect x="790.5" y="274.5" width="1211" height="140.5" fill="#fff" stroke="#d3d3d3"/>
<line x1="790" y1="294.5" x2="2001" y2="294.5" stroke="#d8d8d8"/>
<line x1="790" y1="324.5" x2="2001" y2="324.5" stroke="#d8d8d8"/>
<line x1="790" y1="354.5" x2="2001" y2="354.5" stroke="#d8d8d8"/>
<line x1="790" y1="384.5" x2="2001" y2="384.5" stroke="#d8d8d8"/>
<path d="M786 414.5H790 M786 408.5H790 M786 402.5H790 M786 396.5H790 M786 390.5H790 M786 384.5H790 M786 378.5H790 M786 372.5H790 M786 366.5H790 M786 360.5H790 M786 354.5H790 M786 348.5H790 M786 342.5H790 M786 336.5H790 M786 330.5H790 M786 324.5H790 M786 318.5H790 M786 312.5H790 M786 306.5H790 M786 300.5H790 M786 294.5H790 M786 288.5H790 M786 282.5H790 M786 276.5H790 M783 294.5H790 M783 324.5H790 M783 354.5H790 M783 384.5H790 M783 414.5H790" stroke="#c8c8c8"/>
<path d="M811.5 415V418 M851.5 415V418 M892.5 415V421 M932.5 415V418 M973.5 415V418 M1013.5 415V418 M1053.5 415V418 M1094.5 415V421 M1134.5 415V418 M1174.5 415V418 M1215.5 415V418 M1255.5 415V418 M1295.5 415V421 M1336.5 415V418 M1376.5 415V418 M1416.5 415V418 M1457.5 415V418 M1497.5 415V421 M1538.5 415V418 M1578.5 415V418 M1618.5 415V418 M1659.5 415V418 M1699.5 415V421 M1739.5 415V418 M1780.5 415V418 M1820.5 415V418 M1860.5 415V418 M1901.5 415V421 M1941.5 415V418 M1982.5 415V418" stroke="#c8c8c8"/>
<rect x="1032.5" y="403.5" width="120" height="11.5" fill="#5f8b94" stroke="#2f3f44"/>
<rect x="1436.5" y="287.5" width="120" height="127.5" fill="#b94b51" stroke="#3a1a1c"/>
<rect x="1840.5" y="396.5" width="120" height="18.5" fill="#b94b51" stroke="#3a1a1c"/>
</svg>
<div class="t" style="left:700px;width:80px;text-align:right;top:286px;font-size:12px;line-height:16px;color:#222">200M</div>
<div class="t" style="left:700px;width:80px;text-align:right;top:317px;font-size:12px;line-height:16px;color:#222">150M</div>
<div class="t" style="left:700px;width:80px;text-align:right;top:347px;font-size:12px;line-height:16px;color:#222">100M</div>
<div class="t" style="left:700px;width:80px;text-align:right;top:377px;font-size:12px;line-height:16px;color:#222">50M</div>
<div class="t" style="left:700px;width:80px;text-align:right;top:407px;font-size:12px;line-height:16px;color:#222">0M</div>
<div class="t" style="left:862px;width:60px;text-align:center;top:421px;font-size:12px;line-height:16px;color:#222">000</div>
<div class="t" style="left:1064px;width:60px;text-align:center;top:421px;font-size:12px;line-height:16px;color:#222">100</div>
<div class="t" style="left:1266px;width:60px;text-align:center;top:421px;font-size:12px;line-height:16px;color:#222">200</div>
<div class="t" style="left:1467px;width:60px;text-align:center;top:421px;font-size:12px;line-height:16px;color:#222">280</div>
<div class="t" style="left:1669px;width:60px;text-align:center;top:421px;font-size:12px;line-height:16px;color:#222">284</div>
<div class="t" style="left:1871px;width:60px;text-align:center;top:421px;font-size:12px;line-height:16px;color:#222">286</div>
<div class="t" style="left:672px;top:336px;width:116px;text-align:center;transform:rotate(-90deg);font-size:16px;line-height:20px;color:#333">IV_SALE (Sum)</div>
<div class="a" style="left:542px;top:458px;width:1477px;height:559px;background:#fff;border:1px solid #d0d0d0"><div class="a" style="left:0;top:0;width:1475px;height:54px;background:#f3f3f3"></div></div>
<div class="t" style="left:547px;top:469px;font-size:11.5px;line-height:15px;font-weight:bold;color:#111">Detailed Information</div>
<svg style="left:1955px;top:467px" width="16" height="16" viewBox="0 0 16 16" fill="none" stroke="#222" stroke-width="1.6"><path d="M5 6H1V15H15V6H11 M8 11V1 M4.8 4L8 1L11.2 4"/></svg>
<svg style="left:1978px;top:473px" width="9" height="5" viewBox="0 0 9 5" fill="none" stroke="#333" stroke-width="1"><path d="M0.5 0.5L4.5 4.5L8.5 0.5"/></svg>
<svg style="left:1995px;top:468px" width="15" height="15" viewBox="0 0 15 15" fill="none" stroke="#333" stroke-width="1.5"><path d="M1 5V1H5 M1 1L4.5 4.5 M10 1H14V5 M14 1L10.5 4.5 M1 10V14H5 M1 14L4.5 10.5 M14 10V14H10 M14 14L10.5 10.5"/></svg>
<svg style="left:0;top:0" width="2048" height="1113" viewBox="0 0 2048 1113">
<path d="M679.5 492V1016 M753.5 492V1016 M1089.5 492V1016 M1252.5 492V1016 M1405.5 492V1016 M1569.5 492V1016 M1733.5 492V1016 M1884.5 492V1016 M2018.5 492V1016 M543 512.5H2018 M543 533.5H2018 M543 554.5H2018 M543 575.5H2018 M543 596.5H2018 M543 617.5H2018 M543 638.5H2018 M543 659.5H2018 M543 680.5H2018 M543 701.5H2018 M543 722.5H2018 M543 743.5H2018 M543 764.5H2018 M543 785.5H2018 M543 806.5H2018 M543 827.5H2018 M543 848.5H2018 M543 869.5H2018 M543 890.5H2018 M543 911.5H2018 M543 932.5H2018 M543 953.5H2018 M543 974.5H2018 M543 995.5H2018 M543 1016.5H2018" stroke="#d5d5d5" stroke-width="1"/>
</svg>
<div class="t" style="left:549px;top:494.5px;font-size:11px;line-height:15px;color:#222">Business Unit</div>
<div class="t" style="left:685px;top:494.5px;font-size:11px;line-height:15px;color:#222">Customer...</div>
<div class="t" style="left:759px;top:494.5px;font-size:11px;line-height:15px;color:#222">Customer Name</div>
<div class="t" style="left:1095px;top:494.5px;font-size:11px;line-height:15px;color:#222">Operating Centre</div>
<div class="t" style="left:1258px;top:494.5px;font-size:11px;line-height:15px;color:#222">Month and Year</div>
<div class="t" style="left:1411px;top:494.5px;font-size:11px;line-height:15px;color:#222">Document Type</div>
<div class="t" style="left:1575px;top:494.5px;font-size:11px;line-height:15px;color:#222">Document Status</div>
<div class="t" style="left:1739px;top:494.5px;font-size:11px;line-height:15px;color:#222">Invoice Number</div>
<div class="t" style="left:1890px;top:494.5px;font-size:11px;line-height:15px;color:#222">Sale Amount</div>
<div class="t" style="left:1096px;top:515px;font-size:11px;line-height:16px;color:#111">100</div>
<div class="t" style="left:1259px;top:515px;font-size:11px;line-height:16px;color:#111">July 2022</div>
<div class="t" style="left:1412px;top:515px;font-size:11px;line-height:16px;color:#111">Invoice</div>
<div class="t" style="left:1576px;top:515px;font-size:11px;line-height:16px;color:#111">Commited</div>
<div class="t" style="left:1740px;width:140px;text-align:right;top:515px;font-size:11px;line-height:16px;color:#111">3918</div>
<div class="t" style="left:1890px;width:124px;text-align:right;top:515px;font-size:11px;line-height:16px;color:#111">$491.08</div>
<div class="t" style="left:1096px;top:536px;font-size:11px;line-height:16px;color:#111">100</div>
<div class="t" style="left:1259px;top:536px;font-size:11px;line-height:16px;color:#111">August 2022</div>
<div class="t" style="left:1412px;top:536px;font-size:11px;line-height:16px;color:#111">Invoice</div>
<div class="t" style="left:1576px;top:536px;font-size:11px;line-height:16px;color:#111">Commited</div>
<div class="t" style="left:1740px;width:140px;text-align:right;top:536px;font-size:11px;line-height:16px;color:#111">4101</div>
<div class="t" style="left:1890px;width:124px;text-align:right;top:536px;font-size:11px;line-height:16px;color:#111">$465.00</div>
<div class="t" style="left:1096px;top:557px;font-size:11px;line-height:16px;color:#111">100</div>
<div class="t" style="left:1259px;top:557px;font-size:11px;line-height:16px;color:#111">January 2023</div>
<div class="t" style="left:1412px;top:557px;font-size:11px;line-height:16px;color:#111">Invoice</div>
<div class="t" style="left:1576px;top:557px;font-size:11px;line-height:16px;color:#111">Commited</div>
<div class="t" style="left:1740px;width:140px;text-align:right;top:557px;font-size:11px;line-height:16px;color:#111">5455</div>
<div class="t" style="left:1890px;width:124px;text-align:right;top:557px;font-size:11px;line-height:16px;color:#111">$220.81</div>
<div class="t" style="left:1096px;top:578px;font-size:11px;line-height:16px;color:#111">100</div>
<div class="t" style="left:1259px;top:578px;font-size:11px;line-height:16px;color:#111">July 2022</div>
<div class="t" style="left:1412px;top:578px;font-size:11px;line-height:16px;color:#111">Invoice</div>
<div class="t" style="left:1576px;top:578px;font-size:11px;line-height:16px;color:#111">Commited</div>
<div class="t" style="left:1740px;width:140px;text-align:right;top:578px;font-size:11px;line-height:16px;color:#111">3931</div>
<div class="t" style="left:1890px;width:124px;text-align:right;top:578px;font-size:11px;line-height:16px;color:#111">$5,800.00</div>
<div class="t" style="left:1096px;top:599px;font-size:11px;line-height:16px;color:#111">100</div>
<div class="t" style="left:1259px;top:599px;font-size:11px;line-height:16px;color:#111">December 2022</div>
<div class="t" style="left:1412px;top:599px;font-size:11px;line-height:16px;color:#111">Invoice</div>
<div class="t" style="left:1576px;top:599px;font-size:11px;line-height:16px;color:#111">Commited</div>
<div class="t" style="left:1740px;width:140px;text-align:right;top:599px;font-size:11px;line-height:16px;color:#111">5174</div>
<div class="t" style="left:1890px;width:124px;text-align:right;top:599px;font-size:11px;line-height:16px;color:#111">$2,150.00</div>
<div class="t" style="left:1096px;top:620px;font-size:11px;line-height:16px;color:#111">100</div>
<div class="t" style="left:1259px;top:620px;font-size:11px;line-height:16px;color:#111">January 2023</div>
<div class="t" style="left:1412px;top:620px;font-size:11px;line-height:16px;color:#111">Invoice</div>
<div class="t" style="left:1576px;top:620px;font-size:11px;line-height:16px;color:#111">Commited</div>
<div class="t" style="left:1740px;width:140px;text-align:right;top:620px;font-size:11px;line-height:16px;color:#111">5214</div>
<div class="t" style="left:1890px;width:124px;text-align:right;top:620px;font-size:11px;line-height:16px;color:#111">$2,150.00</div>
<div class="t" style="left:1096px;top:641px;font-size:11px;line-height:16px;color:#111">100</div>
<div class="t" style="left:1259px;top:641px;font-size:11px;line-height:16px;color:#111">March 2023</div>
<div class="t" style="left:1412px;top:641px;font-size:11px;line-height:16px;color:#111">Invoice</div>
<div class="t" style="left:1576px;top:641px;font-size:11px;line-height:16px;color:#111">Commited</div>
<div class="t" style="left:1740px;width:140px;text-align:right;top:641px;font-size:11px;line-height:16px;color:#111">5955</div>
<div class="t" style="left:1890px;width:124px;text-align:right;top:641px;font-size:11px;line-height:16px;color:#111">$950.00</div>
<div class="t" style="left:1096px;top:662px;font-size:11px;line-height:16px;color:#111">100</div>
<div class="t" style="left:1259px;top:662px;font-size:11px;line-height:16px;color:#111">April 2023</div>
<div class="t" style="left:1412px;top:662px;font-size:11px;line-height:16px;color:#111">Invoice</div>
<div class="t" style="left:1576px;top:662px;font-size:11px;line-height:16px;color:#111">Commited</div>
<div class="t" style="left:1740px;width:140px;text-align:right;top:662px;font-size:11px;line-height:16px;color:#111">6030</div>
<div class="t" style="left:1890px;width:124px;text-align:right;top:662px;font-size:11px;line-height:16px;color:#111">$6,850.00</div>
<div class="t" style="left:1096px;top:683px;font-size:11px;line-height:16px;color:#111">100</div>
<div class="t" style="left:1259px;top:683px;font-size:11px;line-height:16px;color:#111">May 2023</div>
<div class="t" style="left:1412px;top:683px;font-size:11px;line-height:16px;color:#111">Invoice</div>
<div class="t" style="left:1576px;top:683px;font-size:11px;line-height:16px;color:#111">Commited</div>
<div class="t" style="left:1740px;width:140px;text-align:right;top:683px;font-size:11px;line-height:16px;color:#111">6399</div>
<div class="t" style="left:1890px;width:124px;text-align:right;top:683px;font-size:11px;line-height:16px;color:#111">$950.00</div>
<div class="t" style="left:1096px;top:704px;font-size:11px;line-height:16px;color:#111">100</div>
<div class="t" style="left:1259px;top:704px;font-size:11px;line-height:16px;color:#111">July 2023</div>
<div class="t" style="left:1412px;top:704px;font-size:11px;line-height:16px;color:#111">Invoice</div>
<div class="t" style="left:1576px;top:704px;font-size:11px;line-height:16px;color:#111">Commited</div>
<div class="t" style="left:1740px;width:140px;text-align:right;top:704px;font-size:11px;line-height:16px;color:#111">6854</div>
<div class="t" style="left:1890px;width:124px;text-align:right;top:704px;font-size:11px;line-height:16px;color:#111">$950.00</div>
<div class="t" style="left:1096px;top:725px;font-size:11px;line-height:16px;color:#111">100</div>
<div class="t" style="left:1259px;top:725px;font-size:11px;line-height:16px;color:#111">January 2024</div>
<div class="t" style="left:1412px;top:725px;font-size:11px;line-height:16px;color:#111">Credit Note</div>
<div class="t" style="left:1576px;top:725px;font-size:11px;line-height:16px;color:#111">Commited</div>
<div class="t" style="left:1740px;width:140px;text-align:right;top:725px;font-size:11px;line-height:16px;color:#111">7908</div>
<div class="t" style="left:1890px;width:124px;text-align:right;top:725px;font-size:11px;line-height:16px;color:#111">$2,100.00</div>
<div class="t" style="left:1096px;top:746px;font-size:11px;line-height:16px;color:#111">100</div>
<div class="t" style="left:1259px;top:746px;font-size:11px;line-height:16px;color:#111">October 2022</div>
<div class="t" style="left:1412px;top:746px;font-size:11px;line-height:16px;color:#111">Invoice</div>
<div class="t" style="left:1576px;top:746px;font-size:11px;line-height:16px;color:#111">Commited</div>
<div class="t" style="left:1740px;width:140px;text-align:right;top:746px;font-size:11px;line-height:16px;color:#111">4929</div>
<div class="t" style="left:1890px;width:124px;text-align:right;top:746px;font-size:11px;line-height:16px;color:#111">$6,000.00</div>
<div class="t" style="left:1096px;top:767px;font-size:11px;line-height:16px;color:#111">100</div>
<div class="t" style="left:1259px;top:767px;font-size:11px;line-height:16px;color:#111">July 2020</div>
<div class="t" style="left:1412px;top:767px;font-size:11px;line-height:16px;color:#111">Invoice</div>
<div class="t" style="left:1576px;top:767px;font-size:11px;line-height:16px;color:#111">Commited</div>
<div class="t" style="left:1740px;width:140px;text-align:right;top:767px;font-size:11px;line-height:16px;color:#111">1</div>
<div class="t" style="left:1890px;width:124px;text-align:right;top:767px;font-size:11px;line-height:16px;color:#111">$96,397.96</div>
<div class="t" style="left:1096px;top:788px;font-size:11px;line-height:16px;color:#111">100</div>
<div class="t" style="left:1259px;top:788px;font-size:11px;line-height:16px;color:#111">August 2020</div>
<div class="t" style="left:1412px;top:788px;font-size:11px;line-height:16px;color:#111">Invoice</div>
<div class="t" style="left:1576px;top:788px;font-size:11px;line-height:16px;color:#111">Commited</div>
<div class="t" style="left:1740px;width:140px;text-align:right;top:788px;font-size:11px;line-height:16px;color:#111">156</div>
<div class="t" style="left:1890px;width:124px;text-align:right;top:788px;font-size:11px;line-height:16px;color:#111">$51,225.80</div>
<div class="t" style="left:1096px;top:809px;font-size:11px;line-height:16px;color:#111">100</div>
<div class="t" style="left:1259px;top:809px;font-size:11px;line-height:16px;color:#111">September 2020</div>
<div class="t" style="left:1412px;top:809px;font-size:11px;line-height:16px;color:#111">Invoice</div>
<div class="t" style="left:1576px;top:809px;font-size:11px;line-height:16px;color:#111">Commited</div>
<div class="t" style="left:1740px;width:140px;text-align:right;top:809px;font-size:11px;line-height:16px;color:#111">243</div>
<div class="t" style="left:1890px;width:124px;text-align:right;top:809px;font-size:11px;line-height:16px;color:#111">$40,996.00</div>
<div class="t" style="left:1096px;top:830px;font-size:11px;line-height:16px;color:#111">100</div>
<div class="t" style="left:1259px;top:830px;font-size:11px;line-height:16px;color:#111">October 2020</div>
<div class="t" style="left:1412px;top:830px;font-size:11px;line-height:16px;color:#111">Credit Note</div>
<div class="t" style="left:1576px;top:830px;font-size:11px;line-height:16px;color:#111">Commited</div>
<div class="t" style="left:1740px;width:140px;text-align:right;top:830px;font-size:11px;line-height:16px;color:#111">461</div>
<div class="t" style="left:1890px;width:124px;text-align:right;top:830px;font-size:11px;line-height:16px;color:#111">$3,552.50</div>
<div class="t" style="left:1096px;top:851px;font-size:11px;line-height:16px;color:#111">100</div>
<div class="t" style="left:1259px;top:851px;font-size:11px;line-height:16px;color:#111">October 2020</div>
<div class="t" style="left:1412px;top:851px;font-size:11px;line-height:16px;color:#111">Invoice</div>
<div class="t" style="left:1576px;top:851px;font-size:11px;line-height:16px;color:#111">Commited</div>
<div class="t" style="left:1740px;width:140px;text-align:right;top:851px;font-size:11px;line-height:16px;color:#111">366</div>
<div class="t" style="left:1890px;width:124px;text-align:right;top:851px;font-size:11px;line-height:16px;color:#111">$60,282.60</div>
<div class="t" style="left:1096px;top:872px;font-size:11px;line-height:16px;color:#111">100</div>
<div class="t" style="left:1259px;top:872px;font-size:11px;line-height:16px;color:#111">November 2020</div>
<div class="t" style="left:1412px;top:872px;font-size:11px;line-height:16px;color:#111">Invoice</div>
<div class="t" style="left:1576px;top:872px;font-size:11px;line-height:16px;color:#111">Commited</div>
<div class="t" style="left:1740px;width:140px;text-align:right;top:872px;font-size:11px;line-height:16px;color:#111">488</div>
<div class="t" style="left:1890px;width:124px;text-align:right;top:872px;font-size:11px;line-height:16px;color:#111">$78,167.30</div>
<div class="t" style="left:1096px;top:893px;font-size:11px;line-height:16px;color:#111">100</div>
<div class="t" style="left:1259px;top:893px;font-size:11px;line-height:16px;color:#111">December 2020</div>
<div class="t" style="left:1412px;top:893px;font-size:11px;line-height:16px;color:#111">Invoice</div>
<div class="t" style="left:1576px;top:893px;font-size:11px;line-height:16px;color:#111">Commited</div>
<div class="t" style="left:1740px;width:140px;text-align:right;top:893px;font-size:11px;line-height:16px;color:#111">463</div>
<div class="t" style="left:1890px;width:124px;text-align:right;top:893px;font-size:11px;line-height:16px;color:#111">$54,000.20</div>
<div class="t" style="left:1096px;top:914px;font-size:11px;line-height:16px;color:#111">100</div>
<div class="t" style="left:1259px;top:914px;font-size:11px;line-height:16px;color:#111">January 2021</div>
<div class="t" style="left:1412px;top:914px;font-size:11px;line-height:16px;color:#111">Invoice</div>
<div class="t" style="left:1576px;top:914px;font-size:11px;line-height:16px;color:#111">Commited</div>
<div class="t" style="left:1740px;width:140px;text-align:right;top:914px;font-size:11px;line-height:16px;color:#111">809</div>
<div class="t" style="left:1890px;width:124px;text-align:right;top:914px;font-size:11px;line-height:16px;color:#111">$42,533.60</div>
<div class="t" style="left:1096px;top:935px;font-size:11px;line-height:16px;color:#111">100</div>
<div class="t" style="left:1259px;top:935px;font-size:11px;line-height:16px;color:#111">February 2021</div>
<div class="t" style="left:1412px;top:935px;font-size:11px;line-height:16px;color:#111">Invoice</div>
<div class="t" style="left:1576px;top:935px;font-size:11px;line-height:16px;color:#111">Commited</div>
<div class="t" style="left:1740px;width:140px;text-align:right;top:935px;font-size:11px;line-height:16px;color:#111">932</div>
<div class="t" style="left:1890px;width:124px;text-align:right;top:935px;font-size:11px;line-height:16px;color:#111">$47,214.40</div>
<div class="t" style="left:1096px;top:956px;font-size:11px;line-height:16px;color:#111">100</div>
<div class="t" style="left:1259px;top:956px;font-size:11px;line-height:16px;color:#111">March 2021</div>
<div class="t" style="left:1412px;top:956px;font-size:11px;line-height:16px;color:#111">Invoice</div>
<div class="t" style="left:1576px;top:956px;font-size:11px;line-height:16px;color:#111">Commited</div>
<div class="t" style="left:1740px;width:140px;text-align:right;top:956px;font-size:11px;line-height:16px;color:#111">1122</div>
<div class="t" style="left:1890px;width:124px;text-align:right;top:956px;font-size:11px;line-height:16px;color:#111">$54,615.00</div>
<div class="t" style="left:1096px;top:977px;font-size:11px;line-height:16px;color:#111">100</div>
<div class="t" style="left:1259px;top:977px;font-size:11px;line-height:16px;color:#111">April 2021</div>
<div class="t" style="left:1412px;top:977px;font-size:11px;line-height:16px;color:#111">Invoice</div>
<div class="t" style="left:1576px;top:977px;font-size:11px;line-height:16px;color:#111">Commited</div>
<div class="t" style="left:1740px;width:140px;text-align:right;top:977px;font-size:11px;line-height:16px;color:#111">1374</div>
<div class="t" style="left:1890px;width:124px;text-align:right;top:977px;font-size:11px;line-height:16px;color:#111">$27,300.00</div>
<div class="t" style="left:1096px;top:998px;font-size:11px;line-height:16px;color:#111">100</div>
<div class="t" style="left:1259px;top:998px;font-size:11px;line-height:16px;color:#111">May 2021</div>
<div class="t" style="left:1412px;top:998px;font-size:11px;line-height:16px;color:#111">Credit Note</div>
<div class="t" style="left:1576px;top:998px;font-size:11px;line-height:16px;color:#111">Commited</div>
<div class="t" style="left:1740px;width:140px;text-align:right;top:998px;font-size:11px;line-height:16px;color:#111">1695</div>
<div class="t" style="left:1890px;width:124px;text-align:right;top:998px;font-size:11px;line-height:16px;color:#111">$2,310.00</div>
<div class="t" style="left:549px;top:999px;font-size:11px;line-height:16px;color:#111">ALT_LOG</div>
<div class="t" style="left:685px;top:999px;font-size:11px;line-height:16px;color:#111">ALTA01</div>
<div class="t" style="left:760px;top:999px;font-size:11px;line-height:16px;color:#111">Allabs Mining &amp; Equipment P/L</div>
<div class="a" style="left:545px;top:513px;width:536px;height:493px;background:linear-gradient(90deg,#ededed 0%,#f0f0f0 6%,#f5f5f5 13%,#f3f3f3 21%,#ebebeb 27%,#e8e8e8 45%,#e3e3e3 60%,#ececec 72%,#f7f7f7 80%,#fcfcfc 88%,#fdfdfd 100%)"></div><div class="a" style="left:545px;top:513px;width:536px;height:493px;background:radial-gradient(ellipse 90px 55px at 300px 18px,rgba(224,224,224,.75),rgba(222,222,222,0)),radial-gradient(ellipse 140px 110px at 440px 200px,rgba(252,252,252,.95),rgba(252,252,252,0))"></div>
<div class="t" style="left:1753px;top:1041px;font-size:11.5px;line-height:16px;font-weight:bold;color:#111">Data As At:</div>
<div class="t" style="left:1821px;top:1041px;font-size:12px;line-height:16px;color:#111">07/11/2024 12:20:16</div>
<div class="a" style="left:1941px;top:1035px;width:80px;height:26px;background:#3c0a78;border-radius:3px"></div>
<div class="t" style="left:1941px;width:80px;text-align:center;top:1040px;font-size:13.5px;line-height:18px;color:#fff">Refresh</div>

<!-- STATUS BAR -->
<div class="a" style="left:5px;top:1080px;width:2040px;height:30px;background:#651ea2;border-radius:0 0 5px 5px"></div>
<div class="t" style="left:1393px;top:1086px;font-size:11.5px;line-height:17px;font-weight:bold;color:#fff">DASHBOARD DEMO&nbsp; /&nbsp; BCRAFT&nbsp; /&nbsp; X86 .NET Framework 4.8</div>
<svg style="left:1739px;top:1086px" width="18" height="18" viewBox="0 0 18 18" fill="none" stroke="#fff" stroke-width="1"><circle cx="9" cy="9" r="8.3"/><path d="M5.8 4.2L8.6 11.2"/><circle cx="9" cy="12" r="1.1"/><path d="M3.2 9H4 M14 9H14.8 M4.8 4.8L5.2 5.2 M13.2 4.8L12.8 5.2 M9 2.8V3.5"/></svg>
<svg style="left:1772px;top:1085px" width="18" height="20" viewBox="0 0 18 20" fill="none" stroke="#fff" stroke-width="1.2"><path d="M9 1.5A5.5 5.5 0 0 0 3.5 7V12L1.5 15H16.5L14.5 12V7A5.5 5.5 0 0 0 9 1.5Z M6.5 17A2.5 2.5 0 0 0 11.5 17"/></svg>
<svg style="left:1802px;top:1086px" width="17" height="17" viewBox="0 0 17 17" fill="none" stroke="#fff" stroke-width="1.1"><path d="M5 6.5A3.5 3.5 0 0 1 12 6.5V11A3.5 3.5 0 0 1 5 11Z M5.5 4L3.5 2 M11.5 4L13.5 2 M5 8.5H1 M12 8.5H16 M5 11.5L2 14 M12 11.5L15 14 M8.5 6.5V14.5 M5.5 6.5H11.5"/></svg>
<div class="a" style="left:1834px;top:1094px;width:11px;height:1px;background:#e8e0f0"></div>
<div class="a" style="left:1849px;top:1093px;width:126px;height:3px;background:#fff"></div>
<div class="a" style="left:1888px;top:1085px;width:10px;height:19px;background:#fff"></div>
<div class="a" style="left:1979px;top:1094px;width:12px;height:1px;background:#c8b8e0"></div>
<div class="a" style="left:1984.5px;top:1089px;width:1px;height:12px;background:#c8b8e0"></div>
<div class="t" style="left:2001px;top:1086px;font-size:11px;line-height:16px;color:#fff">100%</div>

</div>
</body></html>
